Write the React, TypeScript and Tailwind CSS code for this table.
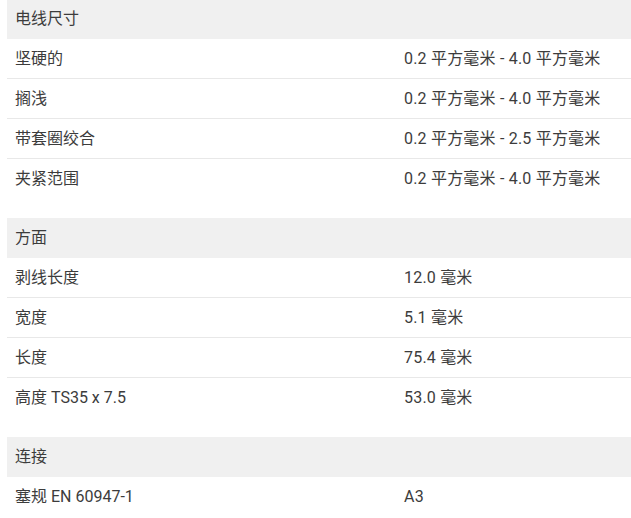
import React from "react";

type Section = {
  title: string;
  rows: [string, string][];
};

const sections: Section[] = [
  {
    title: "电线尺寸",
    rows: [
      ["坚硬的", "0.2 平方毫米 - 4.0 平方毫米"],
      ["搁浅", "0.2 平方毫米 - 4.0 平方毫米"],
      ["带套圈绞合", "0.2 平方毫米 - 2.5 平方毫米"],
      ["夹紧范围", "0.2 平方毫米 - 4.0 平方毫米"],
    ],
  },
  {
    title: "方面",
    rows: [
      ["剥线长度", "12.0 毫米"],
      ["宽度", "5.1 毫米"],
      ["长度", "75.4 毫米"],
      ["高度 TS35 x 7.5", "53.0 毫米"],
    ],
  },
  {
    title: "连接",
    rows: [["塞规 EN 60947-1", "A3"]],
  },
];

export default function App() {
  return (
    <div
      className="h-[518px] w-[631px] overflow-hidden bg-white pl-[7px] text-[16px] text-[#3c3c3c]"
      style={{ fontFamily: 'Roboto, "Noto Sans CJK SC", sans-serif' }}
    >
      <div className="-mt-px">
        {sections.map((s) => (
          <section key={s.title} className="mb-[19px]">
            <div className="flex h-[40px] items-center bg-[#f0f0f0] px-2">{s.title}</div>
            {s.rows.map(([k, v], i) => (
              <div
                key={k}
                className={
                  "flex h-[40px] items-center px-2 " +
                  (i < s.rows.length - 1 ? "border-b border-[#e8e8e8]" : "")
                }
              >
                <div className="w-[389px] shrink-0">{k}</div>
                <div className="tracking-[0.2px]">{v}</div>
              </div>
            ))}
          </section>
        ))}
      </div>
    </div>
  );
}
